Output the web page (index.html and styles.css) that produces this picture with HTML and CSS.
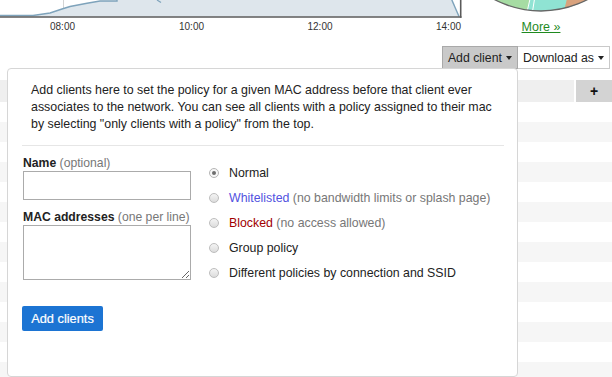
FILE: index.html
```html
<!DOCTYPE html>
<html>
<head>
<meta charset="utf-8">
<link rel="stylesheet" href="styles.css">
</head>
<body>
<div class="page">
  <div class="top">
    <svg class="chart" width="470" height="46" viewBox="0 0 470 46">
      <polygon points="0,15.5 33,15.5 50,13 62,9 70,6.5 87,3.3 100,1 117,1 117,-2 451,-2 459,16.5 0,16.5" fill="#dee6ec"/>
      <line x1="63.5" y1="0" x2="63.5" y2="8.5" stroke="#d4d4d4" stroke-width="1"/>
      <polyline points="0,15.5 33,15.5 50,13 62,9 70,6.5 87,3.3 100,1 117,1 117,-2" fill="none" stroke="#7ea3bb" stroke-width="1.4"/>
      <polyline points="451,-2 459,16.5" fill="none" stroke="#7ea3bb" stroke-width="1.4"/>
      <polyline points="157,0 161,2.5" fill="none" stroke="#7ea3bb" stroke-width="1.2"/>
      <line x1="0" y1="17" x2="461.5" y2="17" stroke="#5a5a5a" stroke-width="1.6"/>
      <line x1="460.7" y1="0" x2="460.7" y2="17.8" stroke="#5a5a5a" stroke-width="1.6"/>
      <text x="62.5" y="29.5" class="tick">08:00</text>
      <text x="191.5" y="29.5" class="tick">10:00</text>
      <text x="320" y="29.5" class="tick">12:00</text>
      <text x="448.5" y="29.5" class="tick">14:00</text>
    </svg>
    <div class="side">
      <svg class="pie" width="122" height="14" viewBox="0 0 122 14">
        <defs><clipPath id="pc"><circle cx="61" cy="-89" r="100"/></clipPath></defs>
        <g clip-path="url(#pc)">
          <rect x="0" y="-5" width="122" height="20" fill="#a6dca3"/>
          <polygon points="50,-1 87,-1 83.5,13 47,13" fill="#8fe3d3"/>
          <polygon points="87,-1 122,-1 122,13 83.5,13" fill="#d9a27d"/>
          <line x1="50" y1="-1" x2="46.8" y2="13" stroke="#fff" stroke-width="1"/>
          <line x1="54.5" y1="-1" x2="52.3" y2="13" stroke="#fff" stroke-width="1"/>
        </g>
        <circle cx="61" cy="-89" r="100" fill="none" stroke="#666" stroke-width="1.3"/>
      </svg>
      <a class="more" href="#">More »</a>
    </div>
  </div>

  <div class="toolbar">
    <button class="btn btn-active">Add client<span class="caret"></span></button>
    <button class="btn">Download as<span class="caret"></span></button>
  </div>

  <div class="table">
    <div class="thead"><div class="th"></div><div class="th th-plus">+</div></div>
    <div class="row"></div><div class="row"></div><div class="row"></div><div class="row"></div>
    <div class="row"></div><div class="row"></div><div class="row"></div><div class="row"></div>
    <div class="row"></div><div class="row"></div><div class="row"></div><div class="row"></div>
    <div class="row"></div><div class="row"></div>
  </div>

  <div class="popup">
    <p class="intro">Add clients here to set the policy for a given MAC address before that client ever associates to the network. You can see all clients with a policy assigned to their mac by selecting "only clients with a policy" from the top.</p>
    <div class="form">
      <div class="fields">
        <label class="lbl"><b>Name</b> <span class="hint">(optional)</span></label>
        <input class="inp" type="text">
        <label class="lbl lbl-mac"><b>MAC addresses</b> <span class="hint">(one per line)</span></label>
        <textarea class="area"></textarea>
        <button class="submit">Add clients</button>
      </div>
      <div class="policies">
        <div class="opt"><span class="radio radio-on"></span>Normal</div>
        <div class="opt"><span class="radio"></span><span class="wl">Whitelisted</span>&nbsp;<span class="hint">(no bandwidth limits or splash page)</span></div>
        <div class="opt"><span class="radio"></span><span class="bl">Blocked</span>&nbsp;<span class="hint">(no access allowed)</span></div>
        <div class="opt"><span class="radio"></span>Group policy</div>
        <div class="opt"><span class="radio"></span>Different policies by connection and SSID</div>
      </div>
    </div>
  </div>
</div>
</body>
</html>
```

FILE: styles.css
```css
html, body {
  margin: 0;
  padding: 0;
  background: #fff;
}
body {
  font-family: "Liberation Sans", Arial, sans-serif;
  color: #222;
  width: 612px;
  height: 377px;
  overflow: hidden;
}
.page {
  position: relative;
  width: 612px;
  height: 377px;
  overflow: hidden;
}
.top {
  display: flex;
  height: 46px;
}
.chart {
  display: block;
  flex: none;
}
.tick {
  font-family: "Liberation Sans", Arial, sans-serif;
  font-size: 10px;
  fill: #333;
  text-anchor: middle;
}
.side {
  width: 122px;
  margin-left: 10px;
  display: flex;
  flex-direction: column;
  align-items: center;
}
.pie {
  display: block;
}
.more {
  margin-top: 6px;
  font-size: 12.5px;
  color: #1f8a1f;
  text-decoration: underline;
  line-height: 15px;
}
.toolbar {
  display: flex;
  justify-content: flex-end;
  padding-right: 2px;
}
.btn {
  font-family: "Liberation Sans", Arial, sans-serif;
  font-size: 12.3px;
  color: #222;
  height: 23px;
  padding: 0 5px 0 5px;
  margin: 0;
  background: #fff;
  border: 1px solid #c9c9c9;
  border-radius: 0;
  display: flex;
  align-items: center;
}
.btn + .btn {
  border-left: none;
}
.btn-active {
  background: #c9c9c9;
  border-color: #a9a9a9;
  padding-left: 5px;
  padding-right: 5px;
}
.caret {
  display: inline-block;
  width: 0;
  height: 0;
  margin-left: 4px;
  border-left: 3.5px solid transparent;
  border-right: 3.5px solid transparent;
  border-top: 4px solid #222;
}
.table {
  margin-top: 11px;
}
.thead {
  display: flex;
  height: 22px;
}
.th {
  flex: 1;
  background: #efefef;
}
.th-plus {
  flex: none;
  width: 36px;
  margin-left: 2px;
  background: #d3d3d3;
  font-weight: bold;
  font-size: 14px;
  line-height: 22px;
  text-align: center;
  color: #111;
}
.row {
  height: 20px;
}
.row:nth-child(odd) {
  background: #f6f6f6;
}
.popup {
  position: absolute;
  left: 7px;
  top: 68px;
  width: 511px;
  height: 309px;
  box-sizing: border-box;
  background: #fff;
  border: 1px solid #d6d6d6;
  border-radius: 4px;
  padding: 13px 13px 0 14px;
}
.intro {
  margin: 0;
  padding: 0 9px 12px 9px;
  font-size: 12.4px;
  line-height: 17px;
  color: #222;
  border-bottom: 1px solid #e6e6e6;
}
.form {
  display: flex;
}
.fields {
  width: 168px;
  margin-left: 1px;
  padding-top: 10px;
  display: flex;
  flex-direction: column;
  align-items: flex-start;
}
.lbl {
  font-size: 12.2px;
  line-height: 14px;
  margin-bottom: 1px;
  color: #222;
  white-space: nowrap;
}
.lbl b {
  font-weight: bold;
}
.lbl-mac {
  margin-top: 10px;
}
.hint {
  color: #777;
}
.inp {
  box-sizing: border-box;
  width: 168px;
  height: 29px;
  margin: 0;
  border: 1px solid #ababab;
  border-radius: 0;
  padding: 2px 4px;
  font-family: inherit;
}
.area {
  box-sizing: border-box;
  width: 168px;
  height: 55px;
  margin: 0;
  border: 1px solid #ababab;
  border-radius: 0;
  padding: 2px 4px;
  font-family: inherit;
}
.submit {
  margin-top: 26px;
  margin-left: -1px;
  width: 81px;
  height: 25px;
  padding: 0;
  background: #1c74d3;
  border: none;
  border-radius: 2px;
  color: #fff;
  font-family: "Liberation Sans", Arial, sans-serif;
  font-size: 12.8px;
  -webkit-text-stroke: 0.2px #fff;
}
.policies {
  margin-left: 18px;
  padding-top: 14px;
}
.opt {
  display: flex;
  align-items: center;
  height: 25px;
  font-size: 12.35px;
  color: #222;
  white-space: nowrap;
}
.radio {
  box-sizing: border-box;
  width: 10px;
  height: 10px;
  border-radius: 50%;
  border: 1px solid #bdbdbd;
  background: linear-gradient(#f4f4f4, #dcdcdc);
  margin-right: 10px;
  flex: none;
  position: relative;
}
.radio-on {
  background: #f7f7f7;
  border-color: #b5b5b5;
}
.radio-on::after {
  content: "";
  position: absolute;
  left: 2px;
  top: 2px;
  width: 4px;
  height: 4px;
  border-radius: 50%;
  background: #6e6e6e;
}
.wl {
  color: #5252e0;
}
.bl {
  color: #a10000;
}
```
